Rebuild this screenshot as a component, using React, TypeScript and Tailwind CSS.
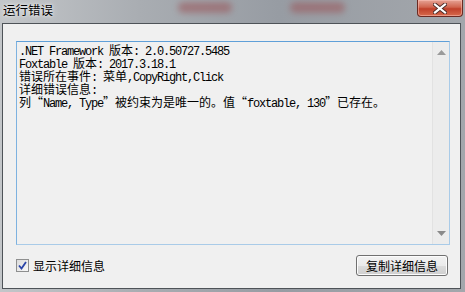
import React from "react";

const CJK = /([\u3000-\u9fff\uff00-\uffef\u201c\u201d]+)/;

function MixedLine({ text }: { text: string }) {
  const parts = text.split(CJK).filter((p) => p.length > 0);
  return (
    <div className="h-[13px] leading-[13px] whitespace-pre text-black flex items-baseline overflow-visible">
      {parts.map((p, i) =>
        CJK.test(p) ? (
          <span key={i} className="font-['Noto_Sans_CJK_SC',sans-serif] text-[12px] leading-[13px]">
            {p}
          </span>
        ) : (
          <span key={i} className="font-['Liberation_Mono',monospace] text-[12px] tracking-[-1.2px] leading-[13px]">
            {p}
          </span>
        )
      )}
    </div>
  );
}

export default function App() {
  const lines = [
    ".NET Framework 版本: 2.0.50727.5485",
    "Foxtable 版本: 2017.3.18.1",
    "错误所在事件: 菜单,CopyRight,Click",
    "详细错误信息:",
    "列“Name, Type”被约束为是唯一的。值“foxtable, 130”已存在。",
  ];
  return (
    <div className="w-[465px] h-[292px] overflow-hidden flex flex-col bg-[linear-gradient(90deg,#c3c6c9_0%,#a9adb2_30%,#979ca3_60%,#a3a7ac_100%)] pl-[2px] pr-[4px] pb-[3px]">
      {/* Title bar */}
      <div className="relative h-[23px] -ml-[2px] -mr-[4px] flex items-start shrink-0">
        <span className="absolute left-[178px] top-[2px] w-[54px] h-[11px] rounded-full bg-[#9a5a5e] opacity-60 blur-[3px]" />
        <span className="absolute left-[290px] top-[2px] w-[55px] h-[11px] rounded-full bg-[#9a5a5e] opacity-60 blur-[3px]" />
        <div className="relative pl-[3px] pt-[2px] text-[12.5px] leading-[15px] text-black font-['Noto_Sans_CJK_SC',sans-serif] [text-shadow:0_0_6px_#e8eaec,0_0_3px_#ffffff]">
          运行错误
        </div>
        <div className="relative ml-auto mr-[2px] w-[46px] h-[17px] rounded-b-[4px] border border-t-0 border-[#6b2a22] bg-[linear-gradient(180deg,#e6a395_0%,#d0644e_45%,#c0402a_55%,#d66a4c_100%)] flex items-center justify-center shadow-[inset_0_0_0_1px_rgba(255,200,190,0.5)]">
          <svg width="14" height="11" viewBox="0 0 14 11">
            <path d="M2 1.5 L12 9.5 M12 1.5 L2 9.5" stroke="#4a2a26" strokeWidth="4" strokeLinecap="square" />
            <path d="M2 1.5 L12 9.5 M12 1.5 L2 9.5" stroke="#ffffff" strokeWidth="2.2" strokeLinecap="square" />
          </svg>
        </div>
      </div>

      {/* Client area */}
      <div className="flex-1 border border-[#4e5358] bg-[#f0f0f0] flex flex-col">
        <div className="ml-[13px] mt-[17px] w-[434px] h-[204px] border border-[#a9cbe8] border-t-[#5f9fd8] border-l-[#7db2e0] flex bg-[#f0f0f0]">
          <div className="flex-1 pl-[2px] pt-[1px]">
            {lines.map((l, i) => (
              <MixedLine key={i} text={l} />
            ))}
          </div>
          <div className="w-[17px] h-full bg-[#ececec] border-l border-[#e2e2e2] flex flex-col items-center justify-between py-[8px]">
            <svg width="9" height="5" viewBox="0 0 9 5">
              <path d="M4.5 0 L9 5 L0 5 Z" fill="#9a9a9a" />
            </svg>
            <svg width="9" height="5" viewBox="0 0 9 5">
              <path d="M0 0 L9 0 L4.5 5 Z" fill="#8a8a8a" />
            </svg>
          </div>
        </div>

        <div className="mt-[10px] h-[21px] flex items-center pl-[13px] pr-[12px]">
          <div className="w-[13px] h-[13px] border border-[#8e8f8f] bg-[linear-gradient(135deg,#dcdcdc,#f8f8f8)] flex items-center justify-center">
            <svg width="9" height="9" viewBox="0 0 9 9">
              <path d="M1 4.5 L3.5 7.5 L8 1" stroke="#2a44a8" strokeWidth="1.8" fill="none" />
            </svg>
          </div>
          <span className="ml-[4px] text-[12px] leading-[14px] text-black font-['Noto_Sans_CJK_SC',sans-serif]">
            显示详细信息
          </span>
          <div className="ml-auto w-[92px] h-[21px] rounded-[3px] border border-[#707070] bg-[linear-gradient(180deg,#f2f2f2_0%,#ebebeb_50%,#dddddd_51%,#cfcfcf_100%)] shadow-[inset_0_0_0_1px_#fcfcfc] flex items-center justify-center text-[12px] leading-[14px] text-black font-['Noto_Sans_CJK_SC',sans-serif]">
            复制详细信息
          </div>
        </div>
      </div>
    </div>
  );
}
